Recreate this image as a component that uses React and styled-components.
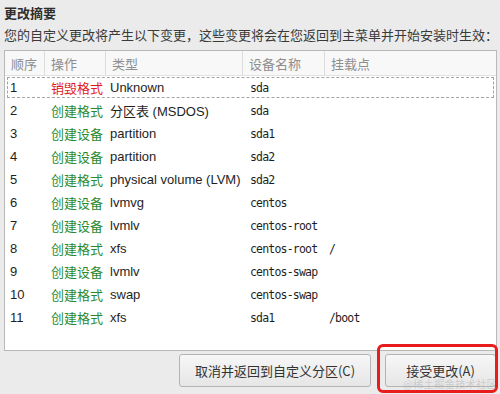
import React from "react";
import styled, { createGlobalStyle } from "styled-components";

const GlobalStyle = createGlobalStyle`
  html, body {
    margin: 0;
    padding: 0;
    background: #ebebeb;
  }
  body {
    width: 500px;
    height: 394px;
    overflow: hidden;
    font-family: "Liberation Sans", "Noto Sans CJK SC", sans-serif;
  }
`;

const Page = styled.div`
  position: relative;
  width: 500px;
  height: 394px;
  box-sizing: border-box;
  padding: 4px 3px 0 4px;
  display: flex;
  flex-direction: column;
`;

const Title = styled.div`
  font-family: "Noto Sans CJK SC", sans-serif;
  font-weight: 700;
  font-size: 13px;
  line-height: 17px;
  color: #2e2e2e;
`;

const Subtitle = styled.div`
  margin-top: 5px;
  font-family: "Noto Sans CJK SC", sans-serif;
  font-size: 13px;
  line-height: 18px;
  color: #3a3a3a;
  white-space: nowrap;
`;

const Table = styled.div`
  margin-top: 6px;
  height: 301px;
  box-sizing: border-box;
  background: #fff;
  border: 1px solid #b9b9b9;
`;

const cols = "40px 61px 137px 82px 1fr";

const HeaderRow = styled.div`
  display: grid;
  grid-template-columns: ${cols};
  height: 24px;
  background: #f8f8f8;
  border-bottom: 1px solid #e2e2e2;
`;

const HeaderCell = styled.div`
  display: flex;
  align-items: center;
  padding-left: ${(p) => p.$pad || 6}px;
  font-family: "Noto Sans CJK SC", sans-serif;
  font-size: 13px;
  color: #8e8e8e;
  border-right: ${(p) => (p.$last ? "none" : "1px solid #dcdcdc")};
`;

const Row = styled.div`
  display: grid;
  grid-template-columns: ${cols};
  height: 23px;
  align-items: center;
  position: relative;
  ${(p) =>
    p.$focused &&
    `
    &::after {
      content: "";
      position: absolute;
      left: 2px;
      right: 2px;
      top: 1px;
      bottom: 1px;
      border: 1px dashed #a4a4a4;
    }
  `}
`;

const Cell = styled.div`
  padding-left: ${(p) => p.$pad || 5}px;
  font-size: 13px;
  color: #1e1e1e;
  white-space: nowrap;
`;

const ActionCell = styled(Cell)`
  font-family: "Noto Sans CJK SC", sans-serif;
  color: ${(p) => (p.$danger ? "#e21a1a" : "#2b8a2e")};
`;

const MonoCell = styled(Cell)`
  font-family: "DejaVu Sans Mono", monospace;
  font-size: 11.5px;
  letter-spacing: -0.8px;
`;

const ButtonBar = styled.div`
  margin-top: 3px;
  display: flex;
  justify-content: flex-end;
  gap: 14px;
  padding-right: 1px;
`;

const Button = styled.button`
  width: ${(p) => p.$w}px;
  height: 33px;
  box-sizing: border-box;
  border: 1px solid #b4b4b4;
  border-radius: 3px;
  background: linear-gradient(#f7f7f7, #e6e6e6);
  font-family: "Noto Sans CJK SC", sans-serif;
  font-size: 13px;
  color: #333;
  padding: 0;
`;

const Highlight = styled.div`
  position: absolute;
  left: 377px;
  top: 344px;
  width: 121px;
  height: 49px;
  box-sizing: border-box;
  border: 3px solid #e81c1c;
  border-radius: 6px;
`;

const Watermark = styled.div`
  position: absolute;
  left: 403px;
  top: 378px;
  font-family: "Noto Sans CJK SC", sans-serif;
  font-size: 10.5px;
  line-height: 12px;
  color: rgba(150, 150, 150, 0.35);
  white-space: nowrap;
`;

const rows = [
  ["1", "销毁格式", "Unknown", "sda", ""],
  ["2", "创建格式", "分区表 (MSDOS)", "sda", ""],
  ["3", "创建设备", "partition", "sda1", ""],
  ["4", "创建设备", "partition", "sda2", ""],
  ["5", "创建格式", "physical volume (LVM)", "sda2", ""],
  ["6", "创建设备", "lvmvg", "centos", ""],
  ["7", "创建设备", "lvmlv", "centos-root", ""],
  ["8", "创建格式", "xfs", "centos-root", "/"],
  ["9", "创建设备", "lvmlv", "centos-swap", ""],
  ["10", "创建格式", "swap", "centos-swap", ""],
  ["11", "创建格式", "xfs", "sda1", "/boot"],
];

export default function App() {
  return (
    <Page>
      <GlobalStyle />
      <Title>更改摘要</Title>
      <Subtitle>
        您的自定义更改将产生以下变更，这些变更将会在您返回到主菜单并开始安装时生效：
      </Subtitle>
      <Table>
        <HeaderRow>
          <HeaderCell>顺序</HeaderCell>
          <HeaderCell>操作</HeaderCell>
          <HeaderCell>类型</HeaderCell>
          <HeaderCell>设备名称</HeaderCell>
          <HeaderCell $last>挂载点</HeaderCell>
        </HeaderRow>
        {rows.map((r, i) => (
          <Row key={r[0]} $focused={i === 0}>
            <Cell>{r[0]}</Cell>
            <ActionCell $pad={6} $danger={r[1] === "销毁格式"}>
              {r[1]}
            </ActionCell>
            <Cell $pad={4}>{r[2]}</Cell>
            <MonoCell $pad={7}>{r[3]}</MonoCell>
            <MonoCell $pad={4}>{r[4]}</MonoCell>
          </Row>
        ))}
      </Table>
      <ButtonBar>
        <Button $w={192}>取消并返回到自定义分区(C)</Button>
        <Button $w={111}>接受更改(A)</Button>
      </ButtonBar>
      <Highlight />
      <Watermark>@稀土掘金技术社区</Watermark>
    </Page>
  );
}
